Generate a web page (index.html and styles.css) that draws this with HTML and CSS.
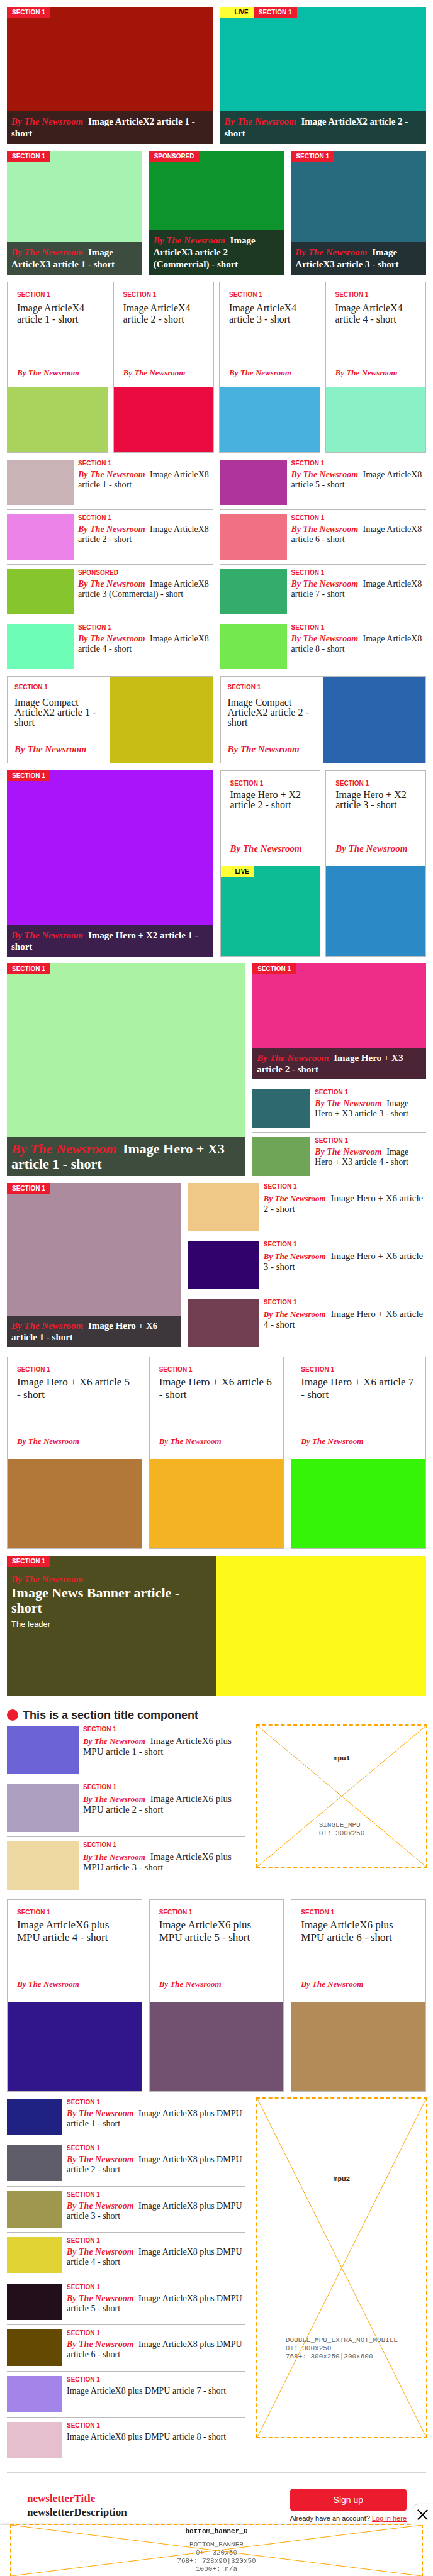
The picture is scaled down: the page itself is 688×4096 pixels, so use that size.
FILE: index.html
```html
<!DOCTYPE html>
<html lang="en">
<head>
<meta charset="utf-8">
<meta name="viewport" content="width=device-width, initial-scale=1">
<title>The Newsroom</title>
<link rel="stylesheet" href="styles.css">
</head>
<body>
<main class="page">

<section class="row cols-2">
  <article class="overlay overlay-218 c-brick">
    <div class="badges"><span class="badge">SECTION 1</span></div>
    <h2 class="caption"><em class="by">By The Newsroom</em> <a href="#">Image ArticleX2 article 1 - short</a></h2>
  </article>
  <article class="overlay overlay-218 c-teal">
    <div class="badges"><span class="badge live">LIVE</span><span class="badge">SECTION 1</span></div>
    <h2 class="caption"><em class="by">By The Newsroom</em> <a href="#">Image ArticleX2 article 2 - short</a></h2>
  </article>
</section>

<section class="row cols-3">
  <article class="overlay overlay-197 c-mint">
    <div class="badges"><span class="badge">SECTION 1</span></div>
    <h2 class="caption"><em class="by">By The Newsroom</em> <a href="#">Image ArticleX3 article 1 - short</a></h2>
  </article>
  <article class="overlay overlay-197 c-green">
    <div class="badges"><span class="badge">SPONSORED</span></div>
    <h2 class="caption"><em class="by">By The Newsroom</em> <a href="#">Image ArticleX3 article 2 (Commercial) - short</a></h2>
  </article>
  <article class="overlay overlay-197 c-petrol">
    <div class="badges"><span class="badge">SECTION 1</span></div>
    <h2 class="caption"><em class="by">By The Newsroom</em> <a href="#">Image ArticleX3 article 3 - short</a></h2>
  </article>
</section>

<section class="row cols-4">
  <article class="card card-x4">
    <div class="card-text"><span class="label">SECTION 1</span><h3 class="head"><a href="#">Image ArticleX4 article 1 - short</a></h3><em class="by">By The Newsroom</em></div>
    <div class="pic c-olive"></div>
  </article>
  <article class="card card-x4">
    <div class="card-text"><span class="label">SECTION 1</span><h3 class="head"><a href="#">Image ArticleX4 article 2 - short</a></h3><em class="by">By The Newsroom</em></div>
    <div class="pic c-crimson"></div>
  </article>
  <article class="card card-x4">
    <div class="card-text"><span class="label">SECTION 1</span><h3 class="head"><a href="#">Image ArticleX4 article 3 - short</a></h3><em class="by">By The Newsroom</em></div>
    <div class="pic c-sky"></div>
  </article>
  <article class="card card-x4">
    <div class="card-text"><span class="label">SECTION 1</span><h3 class="head"><a href="#">Image ArticleX4 article 4 - short</a></h3><em class="by">By The Newsroom</em></div>
    <div class="pic c-aqua"></div>
  </article>
</section>

<section class="row cols-2">
  <ul class="list list-x8">
    <li><div class="pic c-dusk"></div><div class="item-text"><span class="label">SECTION 1</span><h3 class="head"><em class="by">By The Newsroom</em> <a href="#">Image ArticleX8 article 1 - short</a></h3></div></li>
    <li><div class="pic c-orchid"></div><div class="item-text"><span class="label">SECTION 1</span><h3 class="head"><em class="by">By The Newsroom</em> <a href="#">Image ArticleX8 article 2 - short</a></h3></div></li>
    <li><div class="pic c-leaf"></div><div class="item-text"><span class="label">SPONSORED</span><h3 class="head"><em class="by">By The Newsroom</em> <a href="#">Image ArticleX8 article 3 (Commercial) - short</a></h3></div></li>
    <li><div class="pic c-spring"></div><div class="item-text"><span class="label">SECTION 1</span><h3 class="head"><em class="by">By The Newsroom</em> <a href="#">Image ArticleX8 article 4 - short</a></h3></div></li>
  </ul>
  <ul class="list list-x8">
    <li><div class="pic c-plum"></div><div class="item-text"><span class="label">SECTION 1</span><h3 class="head"><em class="by">By The Newsroom</em> <a href="#">Image ArticleX8 article 5 - short</a></h3></div></li>
    <li><div class="pic c-coral"></div><div class="item-text"><span class="label">SECTION 1</span><h3 class="head"><em class="by">By The Newsroom</em> <a href="#">Image ArticleX8 article 6 - short</a></h3></div></li>
    <li><div class="pic c-emerald"></div><div class="item-text"><span class="label">SECTION 1</span><h3 class="head"><em class="by">By The Newsroom</em> <a href="#">Image ArticleX8 article 7 - short</a></h3></div></li>
    <li><div class="pic c-lime"></div><div class="item-text"><span class="label">SECTION 1</span><h3 class="head"><em class="by">By The Newsroom</em> <a href="#">Image ArticleX8 article 8 - short</a></h3></div></li>
  </ul>
</section>

<section class="row cols-2">
  <article class="card compact">
    <div class="card-text"><span class="label">SECTION 1</span><h3 class="head"><a href="#">Image Compact ArticleX2 article 1 - short</a></h3><em class="by">By The Newsroom</em></div>
    <div class="pic c-mustard"></div>
  </article>
  <article class="card compact">
    <div class="card-text"><span class="label">SECTION 1</span><h3 class="head"><a href="#">Image Compact ArticleX2 article 2 - short</a></h3><em class="by">By The Newsroom</em></div>
    <div class="pic c-cobalt"></div>
  </article>
</section>

<section class="row cols-2">
  <article class="overlay overlay-snug c-violet">
    <div class="badges"><span class="badge">SECTION 1</span></div>
    <h2 class="caption"><em class="by">By The Newsroom</em> <a href="#">Image Hero + X2 article 1 - short</a></h2>
  </article>
  <div class="pair">
    <article class="card card-hero2">
      <div class="card-text"><span class="label">SECTION 1</span><h3 class="head"><a href="#">Image Hero + X2 article 2 - short</a></h3><em class="by">By The Newsroom</em></div>
      <div class="pic c-jade"><div class="badges"><span class="badge live">LIVE</span></div></div>
    </article>
    <article class="card card-hero2">
      <div class="card-text"><span class="label">SECTION 1</span><h3 class="head"><a href="#">Image Hero + X2 article 3 - short</a></h3><em class="by">By The Newsroom</em></div>
      <div class="pic c-azure"></div>
    </article>
  </div>
</section>

<section class="row cols-wide-left">
  <article class="overlay overlay-large c-pistachio">
    <div class="badges"><span class="badge">SECTION 1</span></div>
    <h2 class="caption"><em class="by">By The Newsroom</em> <a href="#">Image Hero + X3 article 1 - short</a></h2>
  </article>
  <div class="stack">
    <article class="overlay overlay-snug overlay-184 c-pink">
      <div class="badges"><span class="badge">SECTION 1</span></div>
      <h2 class="caption"><em class="by">By The Newsroom</em> <a href="#">Image Hero + X3 article 2 - short</a></h2>
    </article>
    <ul class="list list-hero3">
      <li><div class="pic c-lagoon"></div><div class="item-text"><span class="label">SECTION 1</span><h3 class="head"><em class="by">By The Newsroom</em> <a href="#">Image Hero + X3 article 3 - short</a></h3></div></li>
      <li><div class="pic c-moss"></div><div class="item-text"><span class="label">SECTION 1</span><h3 class="head"><em class="by">By The Newsroom</em> <a href="#">Image Hero + X3 article 4 - short</a></h3></div></li>
    </ul>
  </div>
</section>

<section class="row cols-wide-right">
  <article class="overlay overlay-snug c-mauve">
    <div class="badges"><span class="badge">SECTION 1</span></div>
    <h2 class="caption"><em class="by">By The Newsroom</em> <a href="#">Image Hero + X6 article 1 - short</a></h2>
  </article>
  <ul class="list list-x6">
    <li><div class="pic c-apricot"></div><div class="item-text"><span class="label">SECTION 1</span><h3 class="head"><em class="by">By The Newsroom</em> <a href="#">Image Hero + X6 article 2 - short</a></h3></div></li>
    <li><div class="pic c-indigo"></div><div class="item-text"><span class="label">SECTION 1</span><h3 class="head"><em class="by">By The Newsroom</em> <a href="#">Image Hero + X6 article 3 - short</a></h3></div></li>
    <li><div class="pic c-wine"></div><div class="item-text"><span class="label">SECTION 1</span><h3 class="head"><em class="by">By The Newsroom</em> <a href="#">Image Hero + X6 article 4 - short</a></h3></div></li>
  </ul>
</section>

<section class="row cols-3 row-spaced">
  <article class="card card-x6">
    <div class="card-text"><span class="label">SECTION 1</span><h3 class="head"><a href="#">Image Hero + X6 article 5 - short</a></h3><em class="by">By The Newsroom</em></div>
    <div class="pic c-bronze"></div>
  </article>
  <article class="card card-x6">
    <div class="card-text"><span class="label">SECTION 1</span><h3 class="head"><a href="#">Image Hero + X6 article 6 - short</a></h3><em class="by">By The Newsroom</em></div>
    <div class="pic c-amber"></div>
  </article>
  <article class="card card-x6">
    <div class="card-text"><span class="label">SECTION 1</span><h3 class="head"><a href="#">Image Hero + X6 article 7 - short</a></h3><em class="by">By The Newsroom</em></div>
    <div class="pic c-neon"></div>
  </article>
</section>

<article class="banner row c-yellow">
  <div class="badges"><span class="badge">SECTION 1</span></div>
  <div class="banner-text">
    <em class="by">By The Newsroom</em>
    <h2 class="banner-head"><a href="#">Image News Banner article - short</a></h2>
    <p class="leader">The leader</p>
  </div>
</article>

<h2 class="section-title">This is a section title component</h2>

<section class="row cols-wide-left">
  <ul class="list list-x6">
    <li><div class="pic c-iris"></div><div class="item-text"><span class="label">SECTION 1</span><h3 class="head"><em class="by">By The Newsroom</em> <a href="#">Image ArticleX6 plus MPU article 1 - short</a></h3></div></li>
    <li><div class="pic c-lilac"></div><div class="item-text"><span class="label">SECTION 1</span><h3 class="head"><em class="by">By The Newsroom</em> <a href="#">Image ArticleX6 plus MPU article 2 - short</a></h3></div></li>
    <li><div class="pic c-sand"></div><div class="item-text"><span class="label">SECTION 1</span><h3 class="head"><em class="by">By The Newsroom</em> <a href="#">Image ArticleX6 plus MPU article 3 - short</a></h3></div></li>
  </ul>
  <aside class="ad ad-mpu">
    <svg class="cross" viewBox="0 0 100 100" preserveAspectRatio="none" aria-hidden="true"><path d="M0 0L100 100M100 0L0 100"/></svg>
    <strong>mpu1</strong>
    <p>SINGLE_MPU<br>0+: 300x250</p>
  </aside>
</section>

<section class="row cols-3 row-spaced">
  <article class="card card-x6">
    <div class="card-text"><span class="label">SECTION 1</span><h3 class="head"><a href="#">Image ArticleX6 plus MPU article 4 - short</a></h3><em class="by">By The Newsroom</em></div>
    <div class="pic c-ultra"></div>
  </article>
  <article class="card card-x6">
    <div class="card-text"><span class="label">SECTION 1</span><h3 class="head"><a href="#">Image ArticleX6 plus MPU article 5 - short</a></h3><em class="by">By The Newsroom</em></div>
    <div class="pic c-grape"></div>
  </article>
  <article class="card card-x6">
    <div class="card-text"><span class="label">SECTION 1</span><h3 class="head"><a href="#">Image ArticleX6 plus MPU article 6 - short</a></h3><em class="by">By The Newsroom</em></div>
    <div class="pic c-camel"></div>
  </article>
</section>

<section class="row cols-wide-left">
  <ul class="list list-dmpu">
    <li><div class="pic c-navy"></div><div class="item-text"><span class="label">SECTION 1</span><h3 class="head"><em class="by">By The Newsroom</em> <a href="#">Image ArticleX8 plus DMPU article 1 - short</a></h3></div></li>
    <li><div class="pic c-slate"></div><div class="item-text"><span class="label">SECTION 1</span><h3 class="head"><em class="by">By The Newsroom</em> <a href="#">Image ArticleX8 plus DMPU article 2 - short</a></h3></div></li>
    <li><div class="pic c-khaki"></div><div class="item-text"><span class="label">SECTION 1</span><h3 class="head"><em class="by">By The Newsroom</em> <a href="#">Image ArticleX8 plus DMPU article 3 - short</a></h3></div></li>
    <li><div class="pic c-lemon"></div><div class="item-text"><span class="label">SECTION 1</span><h3 class="head"><em class="by">By The Newsroom</em> <a href="#">Image ArticleX8 plus DMPU article 4 - short</a></h3></div></li>
    <li><div class="pic c-ink"></div><div class="item-text"><span class="label">SECTION 1</span><h3 class="head"><em class="by">By The Newsroom</em> <a href="#">Image ArticleX8 plus DMPU article 5 - short</a></h3></div></li>
    <li><div class="pic c-umber"></div><div class="item-text"><span class="label">SECTION 1</span><h3 class="head"><em class="by">By The Newsroom</em> <a href="#">Image ArticleX8 plus DMPU article 6 - short</a></h3></div></li>
    <li><div class="pic c-lavender"></div><div class="item-text"><span class="label">SECTION 1</span><h3 class="head"><a href="#">Image ArticleX8 plus DMPU article 7 - short</a></h3></div></li>
    <li><div class="pic c-blush"></div><div class="item-text"><span class="label">SECTION 1</span><h3 class="head"><a href="#">Image ArticleX8 plus DMPU article 8 - short</a></h3></div></li>
  </ul>
  <aside class="ad ad-mpu ad-double">
    <svg class="cross" viewBox="0 0 100 100" preserveAspectRatio="none" aria-hidden="true"><path d="M0 0L100 100M100 0L0 100"/></svg>
    <strong>mpu2</strong>
    <p>DOUBLE_MPU_EXTRA_NOT_MOBILE<br>0+: 300x250<br>768+: 300x250|300x600</p>
  </aside>
</section>

<section class="newsletter">
  <div class="newsletter-text">
    <h2 class="newsletter-title">newsletterTitle</h2>
    <p class="newsletter-desc">newsletterDescription</p>
  </div>
  <div class="signup">
    <button class="signup-button" type="button">Sign up</button>
    <p class="signup-login">Already have an account? <a href="#">Log in here</a></p>
  </div>
</section>
</main>

<aside class="sticky-ad">
  <button class="close" type="button" aria-label="Close">
    <svg viewBox="0 0 18 18" aria-hidden="true"><path d="M1.5 1.5L16.5 16.5M16.5 1.5L1.5 16.5"/></svg>
  </button>
  <div class="ad ad-bottom">
    <svg class="cross" viewBox="0 0 100 100" preserveAspectRatio="none" aria-hidden="true"><path d="M0 0L100 100M100 0L0 100"/></svg>
    <strong>bottom_banner_0</strong>
    <p>BOTTOM_BANNER<br>0+: 320x50<br>768+: 728x90|320x50<br>1000+: n/a</p>
  </div>
</aside>
</body>
</html>
```
FILE: styles.css
```css
:root {
  --red: #ec1b2e;
  --ink: #222;
  --line: #bbb;
  --serif: "Liberation Serif", "Times New Roman", serif;
  --sans: "Liberation Sans", Arial, sans-serif;
  --mono: "Liberation Mono", "Courier New", monospace;
}

* { box-sizing: border-box; }

body {
  margin: 0;
  background: #fff;
  color: var(--ink);
  font-family: var(--serif);
}

h2, h3, p, ul { margin: 0; padding: 0; }
ul { list-style: none; }
a { color: inherit; text-decoration: none; }

.page { padding: 11px 11px 0; }

/* Rows */
.row { margin-bottom: 11px; }
.row-spaced { margin-top: 15px; }
.cols-2, .cols-3, .cols-4, .cols-wide-left, .cols-wide-right { display: grid; gap: 11px; }
.cols-2 { grid-template-columns: repeat(2, minmax(0, 1fr)); }
.cols-3 { grid-template-columns: repeat(3, minmax(0, 1fr)); }
.cols-4 { grid-template-columns: repeat(4, minmax(0, 1fr)); gap: 8px; }
.cols-wide-left { grid-template-columns: minmax(0, 11fr) minmax(0, 8fr); }
.cols-wide-right { grid-template-columns: minmax(0, 8fr) minmax(0, 11fr); }
.pair { display: grid; grid-template-columns: repeat(2, minmax(0, 1fr)); gap: 8px; }

/* Labels */
.label {
  display: block;
  color: var(--red);
  font: bold 10px/12px var(--sans);
}
.badges { position: absolute; top: 0; left: 0; display: flex; }
.badge {
  padding: 0 8px;
  background: var(--red);
  color: #fff;
  font: bold 10px/17px var(--sans);
}
.badge.live { padding-left: 23px; background: #ffff37; color: #000; }
.by { color: var(--red); font-style: italic; font-weight: bold; }
.head { font-weight: normal; }
.head .by, .caption .by { margin-right: 4px; }

/* Picture with the headline laid over its foot */
.overlay { position: relative; display: flex; align-items: flex-end; }
.overlay-184 { min-height: 184px; }
.overlay-197 { min-height: 197px; }
.overlay-218 { min-height: 218px; }
.caption {
  flex: 1;
  padding: 7px;
  background: rgba(34, 34, 34, 0.8);
  color: #fff;
  font-size: 15px;
  line-height: 19px;
}
.overlay-snug .caption { line-height: 18px; }
.overlay-large .caption { font-size: 22px; line-height: 24px; }

/* Bordered card: text above, picture below */
.card { display: flex; flex-direction: column; border: 1px solid var(--line); }
.card-text { flex: 1; display: flex; flex-direction: column; padding: 14px 14px 0 15px; }
.card-text .by { margin-top: auto; font-size: 13px; line-height: 16px; }
.card .pic { position: relative; }

.card-x4 { min-height: 272px; }
.card-x4 .head { margin-top: 6px; font-size: 16px; line-height: 18px; }
.card-x4 .card-text { padding-bottom: 14px; }
.card-x4 .pic { height: 104px; }

.card-hero2 { min-height: 296px; }
.card-hero2 .head { margin-top: 4px; font-size: 16px; line-height: 16px; }
.card-hero2 .by { font-size: 15px; }
.card-hero2 .card-text { padding-bottom: 20px; }
.card-hero2 .pic { height: 143px; }

.card-x6 { min-height: 306px; }
.card-x6 .head { margin-top: 4px; font-size: 17px; line-height: 20px; }
.card-x6 .card-text { padding-bottom: 20px; }
.card-x6 .pic { height: 142px; }

.compact { flex-direction: row; min-height: 139px; }
.compact .card-text { padding: 11px 11px 14px; }
.compact .head { margin-top: 10px; font-size: 16px; line-height: 16px; }
.compact .by { font-size: 15px; }
.compact .pic { flex: 0 0 50%; }

/* Lists of thumbnails */
.list li { display: flex; gap: 7px; }
.list li + li { margin-top: 7px; padding-top: 7px; border-top: 1px solid var(--line); }
.list .pic { flex: none; }
.item-text { flex: 1; min-width: 0; }
.list .head { margin-top: 4px; font-size: 14px; line-height: 16px; }

.list-x8 .pic { width: 106px; height: 72px; }
.list-hero3 .pic { width: 92px; height: 62px; }
.list-hero3 { margin-top: 7px; padding-top: 7px; border-top: 1px solid var(--line); }

.list-x6 .pic { width: 114px; height: 77px; }
.list-x6 .head { font-size: 15px; line-height: 17px; }
.list-x6 .by { font-size: 13px; }

.list-dmpu { display: flex; flex-direction: column; justify-content: space-between; min-height: 572px; }
.list-dmpu .pic { width: 88px; height: 58px; }

/* Banner */
.banner { position: relative; display: flex; min-height: 223px; }
.banner-text {
  flex: 0 0 50%;
  padding: 27px 16px 7px 7px;
  background: rgba(34, 34, 34, 0.8);
  color: #fff;
}
.banner-text .by { display: block; font-size: 15px; line-height: 20px; }
.banner-head { font-size: 22px; line-height: 24px; }
.leader { margin-top: 6px; font: 13px/16px var(--sans); }

.section-title {
  display: flex;
  align-items: center;
  gap: 7px;
  margin: 18px 0 5px;
  font: bold 18px/24px var(--sans);
}
.section-title::before {
  content: "";
  width: 18px;
  height: 18px;
  border-radius: 50%;
  background: var(--red);
}

/* Advert slots */
.ad {
  position: relative;
  display: flex;
  flex-direction: column;
  align-items: center;
  justify-content: space-around;
  outline: 2px dashed orange;
  font: 11px/13px var(--mono);
}
.ad p { color: #666; }
.ad-mpu { justify-self: end; align-self: start; width: 268px; max-width: 100%; min-height: 224px; }
.ad-double { min-height: 538px; }
.cross { position: absolute; top: 0; left: 0; width: 100%; height: 100%; }
.cross path { fill: none; stroke: orange; stroke-width: 1; vector-effect: non-scaling-stroke; }

/* Newsletter */
.newsletter {
  display: flex;
  align-items: center;
  justify-content: space-between;
  margin-top: 22px;
  padding: 25px 31px 0 32px;
  border-top: 1px solid #d3d3d3;
}
.newsletter-title, .newsletter-desc { font-size: 17px; font-weight: bold; line-height: 22px; }
.newsletter-title { color: var(--red); }
.signup { display: flex; flex-direction: column; align-items: stretch; }
.signup-button {
  height: 36px;
  border: 0;
  border-radius: 5px;
  background: var(--red);
  color: #fff;
  font: 14px/18px var(--sans);
}
.signup-login { margin-top: 4px; font: 11px/14px var(--sans); }
.signup-login a { color: var(--red); text-decoration: underline; }

/* Advert fixed to the foot of the window */
.sticky-ad {
  position: fixed;
  right: 0;
  bottom: 0;
  left: 0;
  background: #fff;
  box-shadow: 0 -1px 4px rgba(0, 0, 0, 0.2);
}
.ad-bottom { width: 652px; max-width: 100%; min-height: 81px; margin: 0 auto; text-align: center; }
.close {
  position: absolute;
  right: 0;
  bottom: 100%;
  z-index: 1;
  display: flex;
  width: 33px;
  height: 33px;
  padding: 8px;
  border: 0;
  border-radius: 11px 0 0 0;
  background: #fff;
  box-shadow: 0 -1px 1px rgba(0, 0, 0, 0.2);
}
.close svg { width: 17px; height: 17px; }
.close path { fill: none; stroke: #000; stroke-width: 2.2; stroke-linecap: round; }

/* Picture colours */
.c-brick { background: #a21508; }
.c-teal { background: #08bda5; }
.c-mint { background: #a6f3b1; }
.c-green { background: #0d942d; }
.c-petrol { background: #286a7e; }
.c-olive { background: #a9d35d; }
.c-crimson { background: #ea0c40; }
.c-sky { background: #49b1de; }
.c-aqua { background: #8af0c6; }
.c-dusk { background: #c9b3b6; }
.c-orchid { background: #ec83e9; }
.c-leaf { background: #87c52f; }
.c-spring { background: #6efdb6; }
.c-plum { background: #ad359c; }
.c-coral { background: #f07182; }
.c-emerald { background: #33ad69; }
.c-lime { background: #74e94e; }
.c-mustard { background: #c7bd14; }
.c-cobalt { background: #2964ad; }
.c-violet { background: #a914fa; }
.c-jade { background: #0dbb94; }
.c-azure { background: #2b8ac5; }
.c-pistachio { background: #abf3a3; }
.c-pink { background: #ee2d88; }
.c-lagoon { background: #2e6970; }
.c-moss { background: #6fa556; }
.c-mauve { background: #ac8b9e; }
.c-apricot { background: #efc786; }
.c-indigo { background: #31026b; }
.c-wine { background: #723e51; }
.c-bronze { background: #b27839; }
.c-amber { background: #f4b322; }
.c-neon { background: #36f408; }
.c-yellow { background: #fdf918; }
.c-iris { background: #6c63d7; }
.c-lilac { background: #ad9fbf; }
.c-sand { background: #efd9a3; }
.c-ultra { background: #31158a; }
.c-grape { background: #72506f; }
.c-camel { background: #b38b59; }
.c-navy { background: #1f2183; }
.c-slate { background: #605d6a; }
.c-khaki { background: #a0974f; }
.c-lemon { background: #e2d334; }
.c-ink { background: #230e1c; }
.c-umber { background: #644903; }
.c-lavender { background: #a384e9; }
.c-blush { background: #e5bfce; }
```
